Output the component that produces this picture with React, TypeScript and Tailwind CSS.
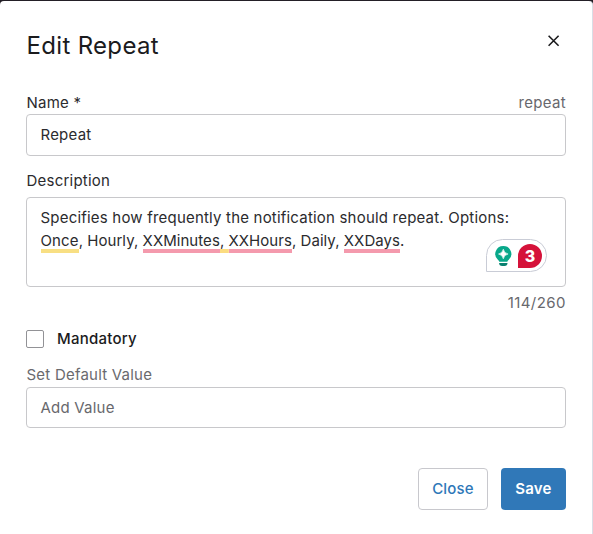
import React from "react";

function GrammarBadge() {
  return (
    <div className="absolute left-[459px] top-[41px] flex h-[33px] w-[61px] items-center rounded-[16.5px] rounded-bl-none border border-[#c9ccd6] bg-white">
      <svg className="ml-[8px] h-[22px] w-[17px]" viewBox="0 0 17 22">
        <path d="M8.300 1a8 8 0 0 0-5.200 14.100c.6.5 1 1 1.200 1.700h8c.2-.7.6-1.200 1.200-1.700A8 8 0 0 0 8.300 1Z" fill="#08a88a" />
        <path d="M8.300 4.200Q9.100 8.200 13.100 9 9.100 9.800 8.300 13.800 7.500 9.800 3.500 9 7.500 8.200 8.300 4.200Z" fill="#fff" stroke="#fff" strokeWidth="0.6" />
        <path d="M4.100 18h8.400a3 3 0 0 1-3 3H7.100a3 3 0 0 1-3-3Z" fill="#08806f" />
      </svg>
      <span className="ml-[6px] flex size-[24px] items-center justify-center rounded-full rounded-bl-none bg-[#d5123a] text-[16px] font-extrabold leading-none tracking-normal text-white">
        3
      </span>
    </div>
  );
}

export default function App() {
  return (
    <div className="h-[534px] w-[593px] overflow-hidden bg-[#231f26] pt-px font-['Inter',sans-serif] text-[15px] tracking-[0.22px] text-[#2b2b2e]">
      <main className="h-[533px] rounded-t-[4px] border-r border-[#d9dee6] bg-white pl-[26px] pr-[26px]">
        <header className="flex h-[88px] items-center justify-between">
          <h1 className="ml-[0.5px] mt-[2px] text-[24px] leading-[30px] tracking-[0.32px] text-[#1b1b1d]">Edit Repeat</h1>
          <button aria-label="Close dialog" className="mb-[9px] mr-[6px]">
            <svg className="size-[12px]" viewBox="0 0 12 12" fill="none" stroke="#1b1b1d" strokeWidth="1.6">
              <path d="M.6.700l10 10M10.600.700l-10 10" />
            </svg>
          </button>
        </header>

        <div className="flex h-[25px] items-center justify-between pl-[0.5px] pt-[2px] leading-[20px]">
          <label>Name *</label>
          <span className="tracking-[0.32px] text-[#68686d]">repeat</span>
        </div>
        <div className="flex h-[42px] items-center rounded-[4px] border border-[#c8c8cb] px-[13.5px]">Repeat</div>

        <label className="mt-[15px] flex h-[26px] items-start pl-[0.5px] leading-[20px]">Description</label>
        <div className="relative h-[90px] rounded-[4px] border border-[#c8c8cb] px-[13.5px] pt-[8px] leading-[23px]">
          <p className="whitespace-nowrap tracking-[0.05px]">
            <span className="tracking-[0.2px]">Specifies how frequently the notification should repeat. Options:</span>
            <br />
            <span className="bg-[linear-gradient(#f8df83,#f8df83)] bg-[length:100%_4px] bg-bottom bg-no-repeat pb-[3px] tracking-[0.12px]">Once</span>, Hourly,{" "}
            <span className="bg-[linear-gradient(#f49aad,#f49aad)] bg-[length:100%_4px] bg-bottom bg-no-repeat pb-[3px]">XXMinutes</span>
            <span className="bg-[linear-gradient(#fbdc80,#fbdc80)] bg-[length:100%_4px] bg-bottom bg-no-repeat pb-[3px]">, </span>
            <span className="bg-[linear-gradient(#f49aad,#f49aad)] bg-[length:100%_4px] bg-bottom bg-no-repeat pb-[3px]">XXHours</span>, Daily,{" "}
            <span className="bg-[linear-gradient(#f49aad,#f49aad)] bg-[length:100%_4px] bg-bottom bg-no-repeat pb-[3px]">XXDays</span>.
          </p>
          <GrammarBadge />
        </div>
        <div className="flex h-[32px] items-center justify-end tracking-[0.45px] text-[#68686d]">114/260</div>

        <div className="mt-[9px] flex h-[22px] items-center">
          <span className="size-[18px] rounded-[2px] border border-[#929296]" />
          <span className="ml-[13px] font-medium tracking-[0.25px] text-[#1b1b1d]">Mandatory</span>
        </div>

        <label className="mt-[15px] flex h-[22px] items-start pl-[0.5px] leading-[20px] text-[#6a6a6e]">Set Default Value</label>
        <div className="flex h-[41px] items-center rounded-[4px] border border-[#c8c8cb] px-[13.5px] pt-px text-[#68686d]">Add Value</div>

        <footer className="mt-[40px] flex justify-end gap-[13px]">
          <button className="h-[42px] w-[70px] rounded-[4px] border border-[#c8c8cd] font-medium tracking-[0.2px] text-[#2e77b8]">Close</button>
          <button className="h-[42px] w-[65px] rounded-[4px] bg-[#3078b8] font-semibold tracking-[0.2px] text-white">Save</button>
        </footer>
      </main>
    </div>
  );
}
